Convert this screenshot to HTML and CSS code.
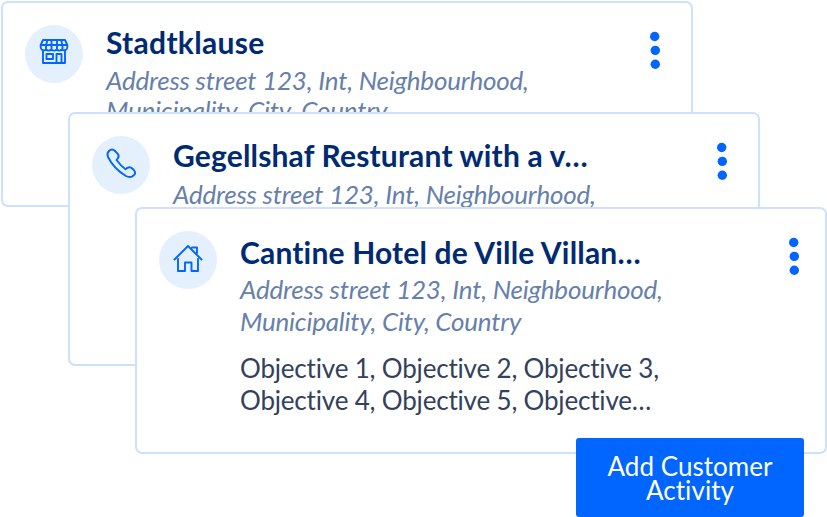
FILE: index.html
```html
<!DOCTYPE html>
<html lang="en"><head><meta charset="utf-8"><title>Customers</title><link rel="stylesheet" href="styles.css"></head>
<body><main class="stage">
<article class="card first"><span class="badge"><svg viewBox="0 0 58 58"><path d="M18 15h22l2.300 5v2.500a3.200 3.200 0 0 1-5.300 2 3.700 3.700 0 0 1-5.300 0 3.700 3.700 0 0 1-5.400 0 3.700 3.700 0 0 1-5.300 0 3.200 3.200 0 0 1-5.300-2V20zM16 20h26M22.500 15l-1.500 5v4.500M26.500 15v9M32 15v9M36 15l1.500 5v4M18 25v13h22V25M21.500 29h6.500v5h-6.500zM31.500 38v-9h5v9"/></svg></span><div class="body"><h2>Stadtklause</h2><p class="address">Address street 123, Int, Neighbourhood,<br>Municipality, City, Country</p></div><svg class="menu" viewBox="0 0 12 40"><circle cx="5.700" cy="5.500" r="4.700"/><circle cx="6.300" cy="19.400" r="4.700"/><circle cx="6.300" cy="33.300" r="4.700"/></svg></article>
<article class="card second"><span class="badge"><svg viewBox="0 0 58 58"><path d="M17 15q3-3 6 0l2.500 2.700q2.300 2.500.2 4.800l-1.200 1.500q4.500 6 9 9.300l2-1.500q2.500-1.400 4.800.7l1.500 1.500q2.500 3 .2 5l-1.500 1.200q-2.500 1.800-6.500-.2Q22 33 16 21q-1.500-3.500 1-6z"/></svg></span><div class="body"><h2>Gegellshaf Resturant with a v…</h2><p class="address">Address street 123, Int, Neighbourhood,</p></div><svg class="menu" viewBox="0 0 12 40"><circle cx="5.700" cy="5.500" r="4.700"/><circle cx="6.300" cy="19.400" r="4.700"/><circle cx="6.300" cy="33.300" r="4.700"/></svg></article>
<article class="card third"><span class="badge"><svg viewBox="0 0 58 58"><path d="M15.500 28.500L29 15l13.500 13.500M19 28v12h7V31.500h6.500V40H39V28M33 16.500h5V22"/></svg></span><div class="body"><h2>Cantine Hotel de Ville Villan…</h2><p class="address">Address street 123, Int, Neighbourhood,<br>Municipality, City, Country</p><p class="objectives">Objective 1, Objective 2, Objective 3,<br>Objective 4, Objective 5, Objective…</p></div><svg class="menu" viewBox="0 0 12 40"><circle cx="5.700" cy="5.500" r="4.700"/><circle cx="6.300" cy="19.400" r="4.700"/><circle cx="6.300" cy="33.300" r="4.700"/></svg></article>
<button class="add">Add Customer<br>Activity</button>
</main></body></html>
```
FILE: styles.css
```css
*{box-sizing:border-box}
body{margin:0;background:#fff;font-family:Lato,sans-serif;font-variant-ligatures:none}
.stage{position:relative;width:827px;height:517px;overflow:hidden}
.card{position:absolute;width:692px;border:2px solid #cce0ff;border-radius:7px;background:#fff;display:flex;padding:22px 22px 0;overflow:hidden}
.first{left:1px;top:1px;height:206px}
.second{left:68px;top:112px;height:254px}
.third{left:135px;top:207px;height:247px}
.badge{width:58px;height:58px;border-radius:50%;background:#e5f0ff;flex:none}
.badge svg{display:block;width:58px;height:58px;fill:none;stroke:#06f;stroke-width:1.9;stroke-linejoin:round;stroke-linecap:round}
.body{margin-left:23px;flex:1;white-space:nowrap}
.first .body{margin-top:-1px}
.second .body{margin-top:1px}
.third .body{margin-top:3px}
h2{margin:0;color:#002b73;font-size:30px;line-height:36px;font-weight:700;letter-spacing:.17px}
.first h2{letter-spacing:.3px}
p{margin:0;font-size:26px;line-height:32px;letter-spacing:-.22px}
.address{color:#6680ab;font-style:italic;margin-top:3px}
.first .address{line-height:30px;margin-top:5px}
.second .address{margin-top:5px}
.objectives{color:#33415c;margin-top:15px;letter-spacing:-.18px}
.menu{width:12px;height:40px;flex:none;margin:6px 8px 0 0;fill:#06f}
.third .menu{margin-right:3px}
.add{position:absolute;left:576px;top:438px;width:228px;height:79px;border:0;border-radius:3px;background:#06f;color:#fff;font:26px/24px Lato,sans-serif;letter-spacing:.05px}
```
